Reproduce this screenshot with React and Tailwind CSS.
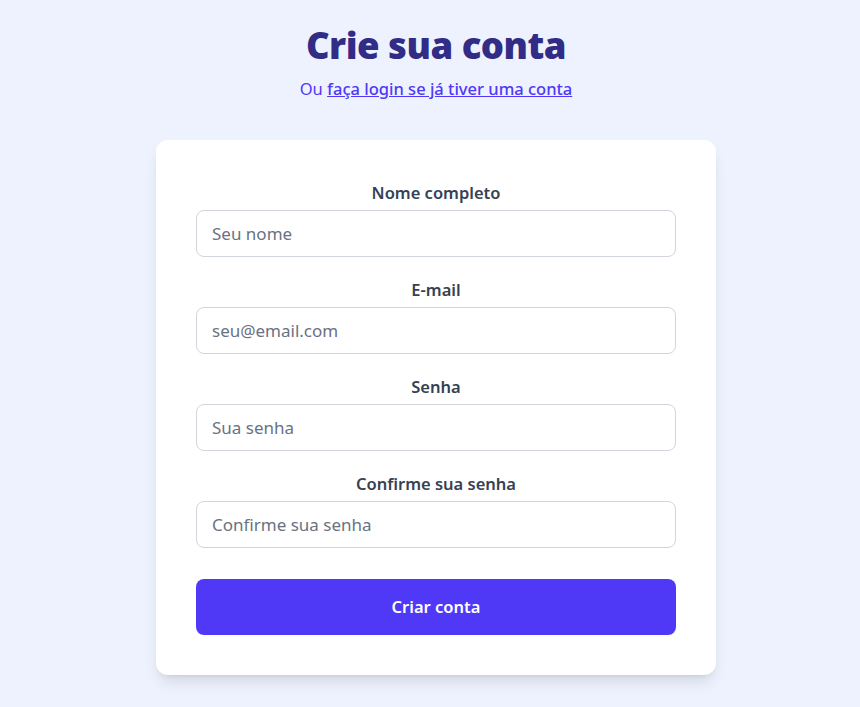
export default function App() {
  const fields = [
    { label: "Nome completo", ph: "Seu nome", type: "text" },
    { label: "E-mail", ph: "seu@email.com", type: "email" },
    { label: "Senha", ph: "Sua senha", type: "password" },
    { label: "Confirme sua senha", ph: "Confirme sua senha", type: "password" },
  ];
  return (
    <div
      className="min-h-[707px] bg-[#eef2ff] flex flex-col items-center pt-[22px] pl-[12px]"
      style={{ fontFamily: '"Noto Sans", "Open Sans", sans-serif' }}
    >
      <h1 className="text-[36.5px] leading-[46px] font-black text-[#312c85] tracking-[-0.5px]">
        Crie sua conta
      </h1>
      <p className="mt-[9px] text-[16.5px] leading-[24px] text-[#4f39f6]">
        Ou{" "}
        <a href="#" className="underline font-medium">
          faça login se já tiver uma conta
        </a>
      </p>
      <div className="mt-[39px] w-[560px] bg-white rounded-xl shadow-lg px-10 pt-[42px] pb-[40px]">
        <form className="flex flex-col gap-[22px]" onSubmit={(e) => e.preventDefault()}>
          {fields.map((f) => (
            <div key={f.label} className="flex flex-col">
              <label className="text-center text-[16.5px] leading-[22px] font-semibold text-[#364153] mb-[6px]">
                {f.label}
              </label>
              <input
                type={f.type === "password" ? "text" : f.type}
                placeholder={f.ph}
                className="h-[47px] w-full rounded-lg border border-[#d1d5dc] px-[15px] text-[17px] text-gray-900 placeholder:text-[#6a7282] outline-none"
              />
            </div>
          ))}
          <button
            type="submit"
            className="mt-[9px] h-[56px] w-full rounded-lg bg-[#4f39f6] text-white text-[16.5px] font-semibold"
          >
            Criar conta
          </button>
        </form>
      </div>
    </div>
  );
}
